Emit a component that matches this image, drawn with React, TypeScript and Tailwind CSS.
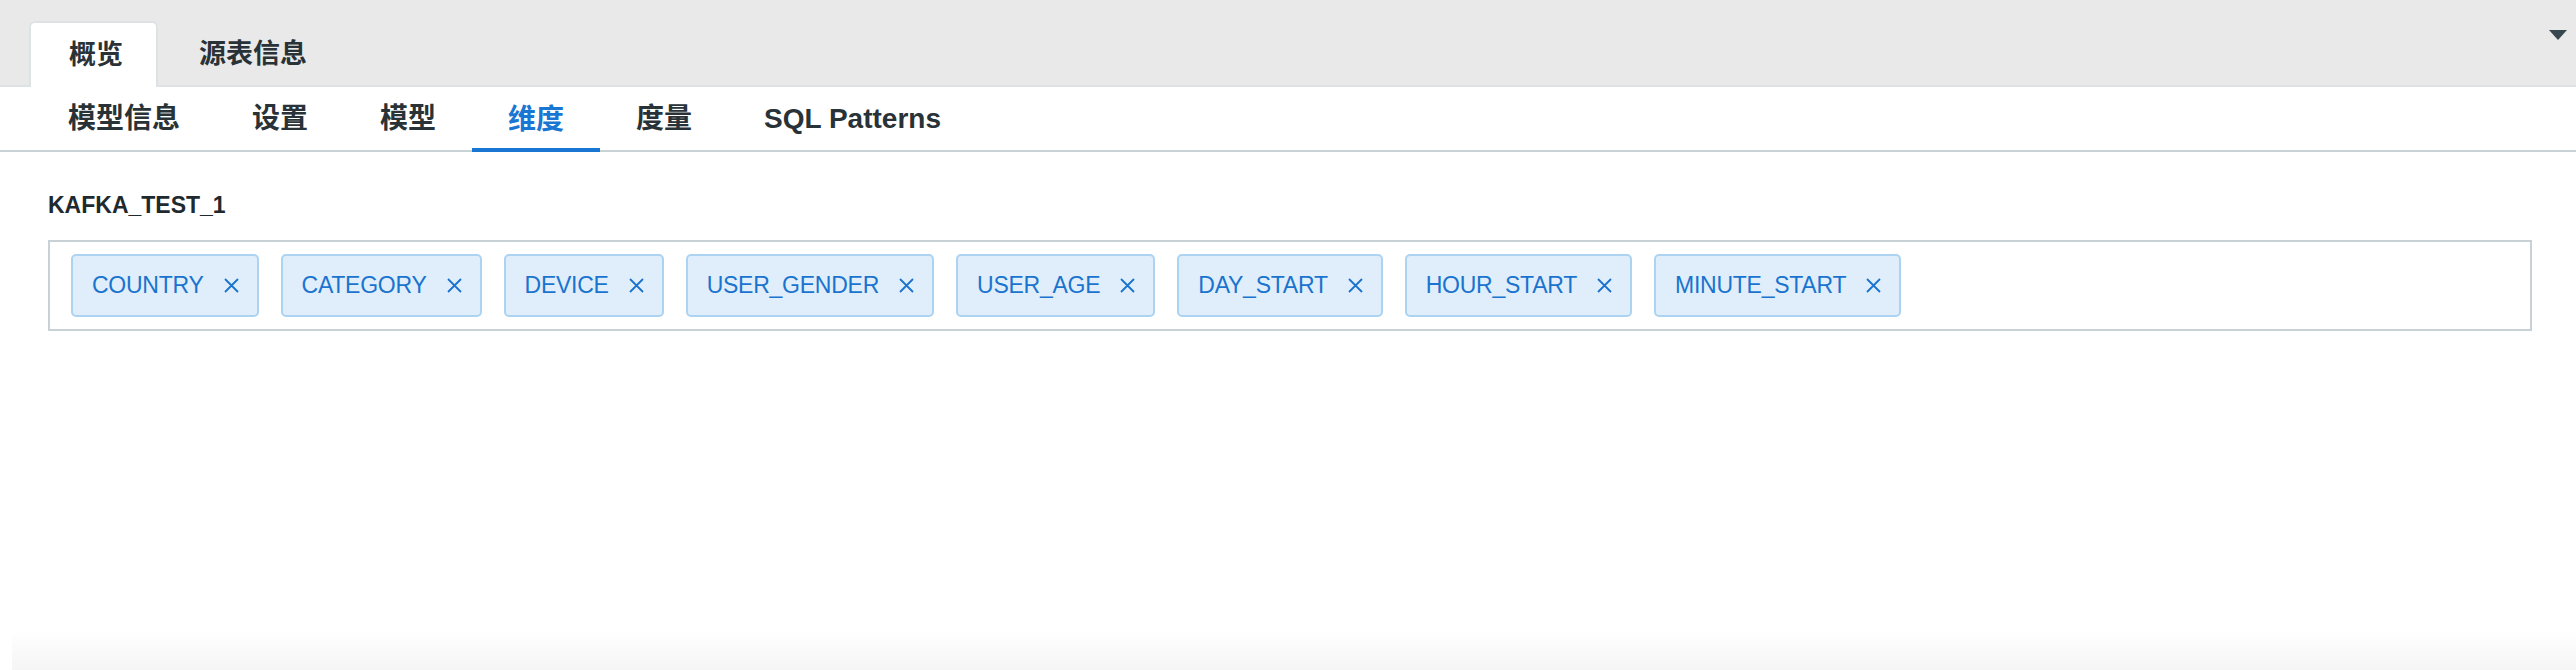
import React from "react";

function CloseIcon() {
    return (
        <svg width="15" height="15" viewBox="0 0 15 15" className="shrink-0">
            <path d="M1 1 L14 14 M14 1 L1 14" stroke="currentColor" strokeWidth="1.8" fill="none" />
        </svg>
    );
}

export default function App() {
    const tabs = ["概览", "源表信息"];
    const navs = ["模型信息", "设置", "模型", "维度", "度量", "SQL Patterns"];
    const dims = ["COUNTRY", "CATEGORY", "DEVICE", "USER_GENDER", "USER_AGE", "DAY_START", "HOUR_START", "MINUTE_START"];

    return (
        <div className="h-[670px] w-full bg-white flex flex-col font-['Liberation_Sans','Noto_Sans_CJK_SC',sans-serif] text-[#283237]">
            {/* top tabs */}
            <div className="h-[87px] shrink-0 bg-[#e9e9e9] border-b-2 border-[#dde2e4] flex items-end pl-[29px]">
                {tabs.map((t, i) => (
                    <div
                        key={t}
                        className={
                            i === 0
                                ? "h-[66px] -mb-[2px] pl-[38px] pr-[33px] bg-white rounded-t-[6px] border-2 border-b-0 border-[#dde2e4] flex items-center text-[27px] font-semibold"
                                : "h-[66px] -mb-[2px] pl-[41px] pr-[32px] flex items-center text-[27px] font-semibold"
                        }
                    >
                        {t}
                    </div>
                ))}
                <div className="ml-auto mr-[9px] self-start mt-[30px] w-0 h-0 border-l-[9px] border-r-[9px] border-t-[10px] border-l-transparent border-r-transparent border-t-[#37474f]" />
            </div>

            {/* sub nav */}
            <div className="h-[65px] shrink-0 flex items-stretch pl-[32px] border-b-2 border-[#c9d3d6]">
                {navs.map((n) => (
                    <div
                        key={n}
                        className={
                            n === "维度"
                                ? "px-[36px] -mb-[2px] flex items-center border-b-4 border-[#1976d2] text-[#1976d2] text-[28px] font-semibold pt-[4px]"
                                : "px-[36px] flex items-center text-[28px] font-semibold"
                        }
                    >
                        {n}
                    </div>
                ))}
            </div>

            {/* content */}
            <div className="pl-[48px] pr-[44px] pt-[38px]">
                <p className="text-[23px] leading-[30px] font-bold text-[#1f2a2f]">KAFKA_TEST_1</p>
                <div className="mt-[20px] border-2 border-[#c8d2d6] px-[21px] py-[12px] flex gap-[22px]">
                    {dims.map((d) => (
                        <div
                            key={d}
                            className="h-[63px] border-2 border-[#acd3f2] bg-[#dfeefa] rounded-[5px] pl-[19px] pr-[18px] flex items-center gap-[20px] text-[23px] tracking-[-0.25px] text-[#1a73cf]"
                        >
                            <span>{d}</span>
                            <CloseIcon />
                        </div>
                    ))}
                </div>
            </div>

            <div className="flex-1" />
            <div className="h-[40px] ml-[12px] bg-gradient-to-b from-white to-[#f5f5f5]" />
        </div>
    );
}
